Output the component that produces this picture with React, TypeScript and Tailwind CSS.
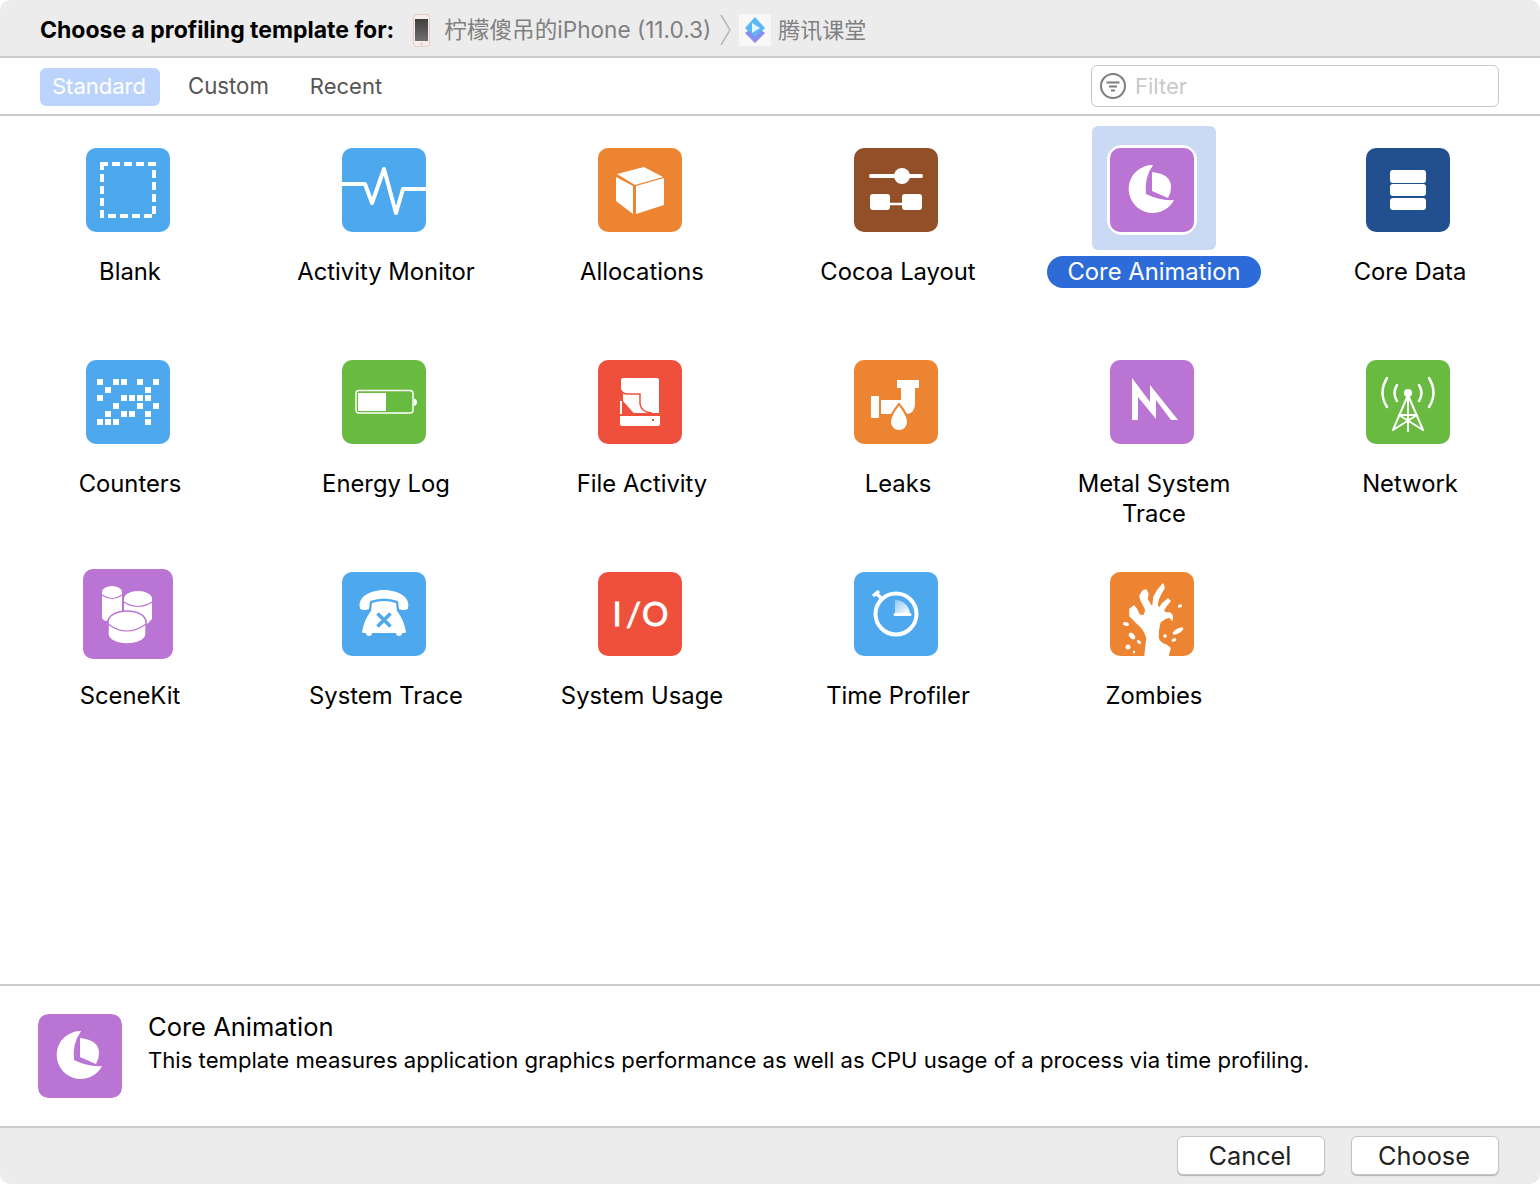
import type { ReactNode } from "react";

const font = "[font-family:Inter,'Noto_Sans_CJK_SC',sans-serif]";

const COUNTER_CELLS = [
  [0, 2, 3, 5, 7],
  [1, 6],
  [0, 3, 4, 5, 6],
  [2, 5, 7],
  [1, 3, 4, 6],
  [0, 1, 2, 6],
];

function Tile({ color, children, size = 84 }: { color: string; children: ReactNode; size?: number }) {
  return (
    <svg width={size} height={size} viewBox={`0 0 ${size} ${size}`} className="block rounded-[10px]" style={{ backgroundColor: color }}>
      {children}
    </svg>
  );
}

const BLUE = "#4da8ee";
const ORANGE = "#ed8431";
const RED = "#ef503c";
const PURPLE = "#ba74d4";
const GREEN = "#69ba41";

function BlankIcon() {
  return (
    <Tile color={BLUE}>
      <rect x="16" y="16" width="52" height="52" fill="none" stroke="#fff" strokeWidth="4" strokeDasharray="8 4" strokeDashoffset="2" />
    </Tile>
  );
}

function ActivityIcon() {
  return (
    <Tile color={BLUE}>
      <path d="M0 36H23L30 55L42 21L54 65L61 41H84" fill="none" stroke="#fff" strokeWidth="4" strokeLinejoin="round" />
    </Tile>
  );
}

function AllocationsIcon() {
  return (
    <Tile color={ORANGE}>
      <path d="M19 26L46 19L65 29L37 37Z M18 29L35 38V66L18 53Z M38 38L66 30V57L38 66Z" fill="#fff" />
    </Tile>
  );
}

function CocoaIcon() {
  return (
    <Tile color="#934f28">
      <path d="M17 28H67" stroke="#fff" strokeWidth="4" strokeLinecap="round" />
      <circle cx="48" cy="28" r="8" fill="#fff" />
      <rect x="16" y="46" width="20" height="16" rx="3" fill="#fff" />
      <rect x="48" y="46" width="20" height="16" rx="3" fill="#fff" />
      <path d="M36 56H48" stroke="#fff" strokeWidth="2.5" />
    </Tile>
  );
}

function CoreAnimationIcon() {
  return (
    <Tile color={PURPLE}>
      <path d="M43 17A24 24 0 1 0 64 52Q50 53 36 46Q34 30 43 17Z" fill="#fff" />
      <path d="M42 24Q61 26 61 39Q61 45 58 50L42 43Z" fill="#fff" />
    </Tile>
  );
}

function CoreDataIcon() {
  return (
    <Tile color="#22508f">
      <rect x="24" y="22" width="36" height="13" rx="3" fill="#fff" />
      <rect x="24" y="36" width="36" height="12" rx="3" fill="#fff" />
      <rect x="24" y="50" width="36" height="12" rx="3" fill="#fff" />
    </Tile>
  );
}

function CountersIcon() {
  return (
    <Tile color={BLUE}>
      {COUNTER_CELLS.map((cols, r) =>
        cols.map((c) => <rect key={`${r}-${c}`} x={11 + c * 8} y={19 + r * 8} width="6" height="6" fill="#fff" />),
      )}
    </Tile>
  );
}

function EnergyIcon() {
  return (
    <Tile color={GREEN}>
      <rect x="14" y="30.5" width="57" height="22.5" rx="3" fill="none" stroke="#fff" strokeWidth="1.5" />
      <rect x="16" y="33" width="28" height="18" fill="#fff" />
      <path d="M72 38.5Q75 39 75 42Q75 45 72 46Z" fill="#fff" />
    </Tile>
  );
}

function FileActivityIcon() {
  return (
    <Tile color={RED}>
      <path d="M23 20Q23 18 25 18H59Q61 18 61 20V53H25V34L23 30Z" fill="#fff" />
      <path d="M23 30Q24 34 30 34H42V44Q43 52 54 53" fill="none" stroke={RED} strokeWidth="1.5" />
      <path d="M25 41L36 53.5H25Z" fill={RED} />
      <rect x="22" y="41" width="2" height="13" fill="#fff" />
      <path d="M22 56H62V64Q62 66 60 66H24Q22 66 22 64Z" fill="#fff" />
      <rect x="54" y="59" width="2" height="2" fill={RED} />
    </Tile>
  );
}

function LeaksIcon() {
  return (
    <Tile color={ORANGE}>
      <rect x="43" y="20" width="22" height="8" fill="#fff" />
      <path d="M27 40H47V28H61V44Q61 54 51 54H27Z" fill="#fff" />
      <rect x="17" y="36" width="8" height="22" rx="1" fill="#fff" />
      <path d="M45 44C45 44 54 55 54 62A9 9 0 0 1 36 62C36 55 45 44 45 44Z" fill="#fff" stroke={ORANGE} strokeWidth="2" />
    </Tile>
  );
}

function MetalIcon() {
  return (
    <Tile color={PURPLE}>
      <path d="M22 18L40 42V25L68 60H61L46 40V59L28 37V60H22Z" fill="#fff" />
    </Tile>
  );
}

function NetworkIcon() {
  return (
    <Tile color={GREEN}>
      <g fill="none" stroke="#fff" strokeWidth="2.5" strokeLinecap="round">
        <path d="M21 18Q12 33 21 47M63 18Q72 33 63 47M31 25Q26 33 31 41M53 25Q58 33 53 41" />
        <path d="M42 35L27 70M42 35L57 70M42 35V71M27 70L51 55M57 70L33 55M33 55H51" strokeWidth="2" />
      </g>
      <circle cx="42" cy="33" r="4" fill="#fff" />
    </Tile>
  );
}

function SceneKitIcon() {
  return (
    <Tile color={PURPLE} size={90}>
      <path d="M19 23A10 6 0 0 1 39 23V48L23 52Q19 51 19 48Z" fill="#fff" />
      <path d="M19 26Q29 33 39 26" fill="none" stroke={PURPLE} strokeWidth="1.2" />
      <path d="M41 30A14 8 0 0 1 69 30V50Q66 54 62 56L41 42Z" fill="#fff" />
      <path d="M41 33Q55 42 69 33" fill="none" stroke={PURPLE} strokeWidth="1.2" />
      <path d="M25 53A19 11 0 0 1 63 53V65C63 71 54 75 44 75C34 75 25 71 25 65Z" fill="#fff" stroke={PURPLE} strokeWidth="1.5" />
      <path d="M25 55Q44 69 63 55" fill="none" stroke={PURPLE} strokeWidth="1.2" />
    </Tile>
  );
}

function SystemTraceIcon() {
  return (
    <Tile color={BLUE}>
      <path d="M18 36C15 24 30 18 42 18C54 18 69 24 66 36Q66 38 60 38L57 37L56 29Q42 24 28 29L27 37L24 38Q18 38 18 36Z" fill="#fff" />
      <path d="M30 31Q42 27 54 31L55 39Q62 48 64 60Q64 61 60 61H24Q20 61 20 60Q22 48 29 39Z" fill="#fff" />
      <circle cx="27" cy="61" r="3" fill="#fff" />
      <circle cx="57" cy="61" r="3" fill="#fff" />
      <path d="M35.5 41.5L48.5 54.5M48.5 41.5L35.5 54.5" stroke={BLUE} strokeWidth="3.5" />
    </Tile>
  );
}

function SystemUsageIcon() {
  return (
    <Tile color={RED}>
      <text y="54" fill="#fff" stroke="#fff" strokeWidth="0.8" fontSize="33" fontFamily="Lato, sans-serif">
        <tspan x="14.5">I</tspan>
        <tspan x="28">/</tspan>
        <tspan x="44">O</tspan>
      </text>
    </Tile>
  );
}

function TimeProfilerIcon() {
  return (
    <Tile color={BLUE}>
      <defs>
        <linearGradient id="pie" x1="0" y1="0" x2="1" y2="1">
          <stop offset="0" stopColor="#8cc8f4" />
          <stop offset="1" stopColor="#fff" />
        </linearGradient>
      </defs>
      <circle cx="42" cy="42" r="20.5" fill="none" stroke="#fff" strokeWidth="4" />
      <path d="M19 24L25 19M23 22L28 27" stroke="#fff" strokeWidth="3.5" />
      <path d="M41 28A15 15 0 0 1 56 42H41Z" fill="url(#pie)" />
      <path d="M41 42.5H56" stroke="#fff" strokeWidth="3" strokeLinecap="round" />
    </Tile>
  );
}

function ZombiesIcon() {
  return (
    <Tile color={ORANGE}>
      <path
        d="M35 84L37 66Q35 58 28 52L20 44L20 37L24 34L27 38L29 43L34 44L36 38L31 28L30 24L33 19L36 18L38 22L37 27L41 34L43 34L44 25Q47 18 53 12L54 16Q50 22 48 28L47 34L50 36L52 32L58 27L60 29L56 34L53 39L56 41L60 41Q63 43 62 48L60 45L56 46L50 50Q48 56 48 66Q50 72 56 73L60 76L58 84Z"
        fill="#fff"
        stroke="#fff"
        strokeWidth="1.5"
        strokeLinejoin="round"
      />
      <ellipse cx="16" cy="52" rx="3" ry="1.8" fill="#fff" transform="rotate(15 16 52)" />
      <ellipse cx="22" cy="64" rx="4" ry="2.5" fill="#fff" transform="rotate(50 22 64)" />
      <ellipse cx="29" cy="70" rx="2.5" ry="1.5" fill="#fff" transform="rotate(40 29 70)" />
      <circle cx="18" cy="75" r="2.5" fill="#fff" />
      <circle cx="24" cy="80" r="1.2" fill="#fff" />
      <ellipse cx="70" cy="34" rx="2.2" ry="1.6" fill="#fff" transform="rotate(-20 70 34)" />
      <ellipse cx="68" cy="59" rx="6" ry="2.4" fill="#fff" transform="rotate(-30 68 59)" />
      <ellipse cx="64" cy="68" rx="2.5" ry="1.5" fill="#fff" transform="rotate(-20 64 68)" />
      <circle cx="55" cy="64" r="1.8" fill="#fff" />
    </Tile>
  );
}

type Template = { name: ReactNode; icon: ReactNode; selected?: boolean };

const TEMPLATES: Template[] = [
  { name: "Blank", icon: <BlankIcon /> },
  { name: "Activity Monitor", icon: <ActivityIcon /> },
  { name: "Allocations", icon: <AllocationsIcon /> },
  { name: "Cocoa Layout", icon: <CocoaIcon /> },
  { name: "Core Animation", icon: <CoreAnimationIcon />, selected: true },
  { name: "Core Data", icon: <CoreDataIcon /> },
  { name: "Counters", icon: <CountersIcon /> },
  { name: "Energy Log", icon: <EnergyIcon /> },
  { name: "File Activity", icon: <FileActivityIcon /> },
  { name: "Leaks", icon: <LeaksIcon /> },
  { name: <>Metal System<br />Trace</>, icon: <MetalIcon /> },
  { name: "Network", icon: <NetworkIcon /> },
  { name: "SceneKit", icon: <SceneKitIcon /> },
  { name: "System Trace", icon: <SystemTraceIcon /> },
  { name: "System Usage", icon: <SystemUsageIcon /> },
  { name: "Time Profiler", icon: <TimeProfilerIcon /> },
  { name: "Zombies", icon: <ZombiesIcon /> },
];

function TemplateCell({ item }: { item: Template }) {
  return (
    <div className="flex flex-col items-center">
      <div className={`flex h-[124px] w-[124px] items-center justify-center rounded-md ${item.selected ? "bg-[#cadaf5]" : ""}`}>
        <div className={`mr-1 mt-1 rounded-[12px] ${item.selected ? "ring-[3px] ring-white" : ""}`}>{item.icon}</div>
      </div>
      <div
        className={`mt-1.5 rounded-2xl px-5 py-px text-center text-[23.8px] leading-[30px] ${
          item.selected ? "bg-[#2c6bd8] text-white" : "text-black"
        }`}
      >
        {item.name}
      </div>
    </div>
  );
}

function DeviceIcon() {
  return (
    <svg width="17" height="33" viewBox="0 0 17 33" className="block">
      <defs>
        <linearGradient id="screen" x1="0" y1="0" x2="0" y2="1">
          <stop offset="0" stopColor="#3f3f3f" />
          <stop offset="1" stopColor="#6f6f6f" />
        </linearGradient>
      </defs>
      <rect x="0.5" y="0.5" width="16" height="32" rx="3" fill="#f7eeeb" stroke="#e6c9c0" />
      <rect x="2" y="5" width="13" height="22" fill="url(#screen)" />
      <circle cx="8.5" cy="30" r="1.4" fill="#e6cdc6" />
    </svg>
  );
}

function AppIcon() {
  return (
    <svg width="32" height="32" viewBox="0 0 32 32" className="block bg-[#f8f8f8]">
      <path d="M16 3L26 14L16 24L6 14Z" fill="#5bb8f3" />
      <path d="M6 19L16 29L26 19L22.5 16.5L16 23L9.5 16.5Z" fill="#8a8cf0" />
      <path d="M13 9L21 14L13 19Z" fill="#e6f5ff" />
    </svg>
  );
}

function FilterIcon() {
  return (
    <svg width="28" height="28" viewBox="0 0 28 28" className="block">
      <circle cx="14" cy="14" r="12" fill="none" stroke="#7d7d7d" strokeWidth="2" />
      <path d="M7.5 10.5H20.5M10 14.5H18M12 18.5H16" stroke="#7d7d7d" strokeWidth="2" />
    </svg>
  );
}

export default function App() {
  return (
    <div className={`flex h-[1184px] w-[1540px] flex-col overflow-hidden rounded-[10px] bg-white antialiased ${font}`}>
      <header className="flex h-[58px] shrink-0 items-center border-b-2 border-[#cbcbcb] bg-[#ececec] pl-10 pt-1">
        <span className="text-[23px] font-bold text-black">Choose a profiling template for:</span>
        <span className="ml-[19px]"><DeviceIcon /></span>
        <span className="ml-[14px] text-[22.6px] text-[#808080]">柠檬傻吊的iPhone (11.0.3)</span>
        <svg width="12" height="32" viewBox="0 0 12 32" className="ml-[9px]">
          <path d="M1 1L10 16L1 31" fill="none" stroke="#b9b9b9" strokeWidth="1.5" />
        </svg>
        <span className="ml-[7px]"><AppIcon /></span>
        <span className="ml-[7px] text-[22px] text-[#808080]">腾讯课堂</span>
      </header>

      <nav className="flex h-[58px] shrink-0 items-center border-b-2 border-[#cbcbcb] pl-10 pr-[41px]">
        <span className="mt-0.5 flex h-[38px] w-[120px] items-center justify-center rounded-md bg-[#bcd4fb] pb-0.5 pr-0.5 text-[22px] text-white">Standard</span>
        <span className="ml-7 text-[22.2px] text-[#555]">Custom</span>
        <span className="ml-[41px] text-[22px] text-[#555]">Recent</span>
        <div className="ml-auto flex h-[42px] w-[408px] items-center gap-2 rounded-md border-[1.5px] border-[#c8c8c8] pl-[7px]">
          <FilterIcon />
          <span className="text-[22px] text-[#c9c9c9]">Filter</span>
        </div>
      </nav>

      <main className="grid flex-1 grid-cols-[repeat(6,256px)] auto-rows-[212px] pl-0.5 pt-2.5">
        {TEMPLATES.map((item, i) => (
          <TemplateCell key={i} item={item} />
        ))}
      </main>

      <section className="flex h-[144px] shrink-0 items-center gap-[26px] border-y-2 border-[#cbcbcb] pl-[38px]">
        <div className="overflow-hidden rounded-[10px]"><CoreAnimationIcon /></div>
        <div className="-mt-[23px]">
          <div className="text-[25.5px] leading-[32px] text-black">Core Animation</div>
          <div className="text-[22.14px] leading-[35px] text-black">
            This template measures application graphics performance as well as CPU usage of a process via time profiling.
          </div>
        </div>
      </section>

      <footer className="flex h-[56px] shrink-0 items-center justify-end gap-[26px] bg-[#ececec] pb-0.5 pr-[41px]">
        <button className="h-[39px] w-[148px] rounded-md border border-[#c6c6c6] bg-white pr-0.5 pt-0.5 text-[25.3px] leading-none text-[#222] shadow-[0_1px_1px_rgba(0,0,0,0.25)]">Cancel</button>
        <button className="h-[39px] w-[148px] rounded-md border border-[#c6c6c6] bg-white pr-0.5 pt-0.5 text-[25.3px] leading-none text-[#222] shadow-[0_1px_1px_rgba(0,0,0,0.25)]">Choose</button>
      </footer>
    </div>
  );
}
